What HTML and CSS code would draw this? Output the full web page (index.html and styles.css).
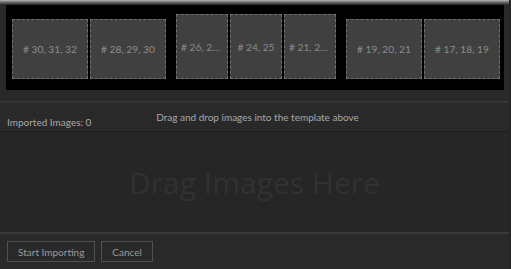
FILE: index.html
```html
<!DOCTYPE html>
<html lang="en">
<head>
    <meta charset="UTF-8">
    <meta name="viewport" content="width=device-width, initial-scale=1.0">
    <title>Import Images</title>
    <link rel="stylesheet" href="styles.css">
</head>
<body>
    <div class="window">
        <div class="top-edge"></div>

        <div class="template">
            <div class="group">
                <div class="slot slot-wide"><span># 30, 31, 32</span></div>
                <div class="slot slot-wide"><span># 28, 29, 30</span></div>
            </div>
            <div class="group">
                <div class="slot slot-narrow"><span># 26, 27, 28</span></div>
                <div class="slot slot-narrow"><span># 24, 25</span></div>
                <div class="slot slot-narrow"><span># 21, 22, 23</span></div>
            </div>
            <div class="group">
                <div class="slot slot-wide"><span># 19, 20, 21</span></div>
                <div class="slot slot-wide"><span># 17, 18, 19</span></div>
            </div>
        </div>

        <div class="status">
            <div class="status-count">Imported Images: 0</div>
            <div class="status-hint">Drag and drop images into the template above</div>
        </div>

        <div class="drop-area">
            <div class="drop-label">Drag Images Here</div>
        </div>

        <div class="footer">
            <button class="button">Start Importing</button>
            <button class="button">Cancel</button>
        </div>
    </div>
</body>
</html>
```

FILE: styles.css
```css
html, body {
    margin: 0;
    padding: 0;
    height: 100%;
}
body {
    background-color: #292929;
    font-family: Lato, 'Open Sans', sans-serif;
    font-size: 10px;
    color: #a8a8a8;
    overflow: hidden;
}
.window {
    height: 269px;
    border-right: 2px solid #242424;
    box-sizing: border-box;
    display: flex;
    flex-direction: column;
}
.top-edge {
    height: 5px;
    background: linear-gradient(#b8b8b8, #6a6a6a 45%, #242424);
}
.template {
    height: 85px;
    margin: 0 5px 0 6px;
    padding: 0 0 11px 6px;
    box-sizing: border-box;
    background-color: #000;
    display: flex;
    align-items: flex-end;
    gap: 10px;
}
.group {
    display: flex;
    gap: 2px;
}
.slot {
    box-sizing: border-box;
    background-color: #404040;
    border: 1px dashed #727272;
    color: #8c8c8c;
    font-size: 10.2px;
    display: flex;
    align-items: center;
    justify-content: center;
    padding: 0 4px;
    overflow: hidden;
}
.slot span {
    white-space: nowrap;
    overflow: hidden;
    text-overflow: ellipsis;
}
.slot-wide {
    width: 76px;
    height: 60px;
}
.slot-narrow {
    width: 52px;
    height: 65px;
}
.status {
    margin-top: 11px;
    height: 29px;
    border-top: 1px solid #3a3a3a;
    border-bottom: 1px solid #1c1c1c;
    box-shadow: inset 0 1px 0 #303030;
    display: grid;
}
.status-count,
.status-hint {
    grid-area: 1 / 1;
}
.status-count {
    align-self: end;
    padding: 0 0 3px 7px;
}
.status-hint {
    justify-self: center;
    padding: 9px 0 0 6px;
}
.drop-area {
    height: 100px;
    background-color: #262626;
    border-bottom: 2px solid #3a3a3a;
    display: flex;
    align-items: center;
    justify-content: center;
}
.drop-label {
    font-family: 'Open Sans', sans-serif;
    font-size: 30px;
    color: #313131;
    padding-top: 1px;
}
.footer {
    display: flex;
    gap: 6px;
    padding: 7px 0 0 7px;
}
.button {
    font-family: inherit;
    font-size: 10px;
    color: #9a9a9a;
    background-color: transparent;
    border: 1px solid #505050;
    height: 21px;
    padding: 0 10px;
    cursor: pointer;
}
.button:hover {
    border-color: #666;
}
```
